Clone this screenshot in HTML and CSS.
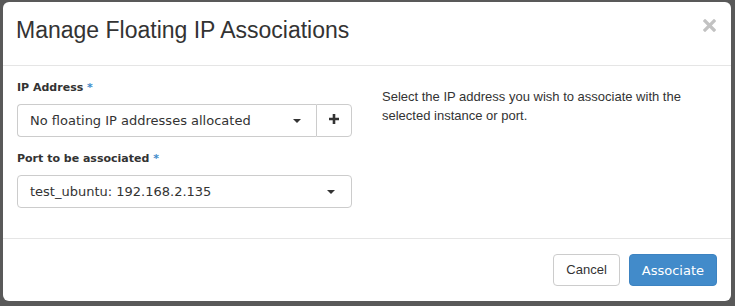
FILE: index.html
```html
<!DOCTYPE html>
<html lang="en">
<head>
    <meta charset="UTF-8">
    <title>Manage Floating IP Associations</title>
    <link rel="stylesheet" href="styles.css">
</head>
<body>
    <div class="modal">
        <div class="modal-header">
            <h3 class="modal-title">Manage Floating IP Associations</h3>
            <button class="close" type="button">
                <svg width="13" height="13" viewBox="0 0 13 13">
                    <path d="M2 2 L11 11 M11 2 L2 11" stroke="#c2c2c2" stroke-width="3.2" stroke-linecap="square" fill="none"/>
                </svg>
            </button>
        </div>

        <div class="modal-body">
            <div class="row">
                <div class="col-form">
                    <div class="form-group">
                        <label class="control-label">IP Address <span class="required">*</span></label>
                        <div class="input-group">
                            <div class="select select-ip">
                                <span>No floating IP addresses allocated</span>
                                <span class="caret"></span>
                            </div>
                            <button class="btn-add" type="button">
                                <svg width="10" height="10" viewBox="0 0 10 10">
                                    <path d="M5 0 V10 M0 5 H10" stroke="#333" stroke-width="2.6" fill="none"/>
                                </svg>
                            </button>
                        </div>
                    </div>

                    <div class="form-group">
                        <label class="control-label">Port to be associated <span class="required">*</span></label>
                        <div class="select select-port">
                            <span>test_ubuntu: 192.168.2.135</span>
                            <span class="caret"></span>
                        </div>
                    </div>
                </div>

                <div class="col-help">
                    <p>Select the IP address you wish to associate with the selected instance or port.</p>
                </div>
            </div>
        </div>

        <div class="modal-footer">
            <a class="btn btn-default" href="#">Cancel</a>
            <button class="btn btn-primary" type="button">Associate</button>
        </div>
    </div>
</body>
</html>
```

FILE: styles.css
```css
body {
    margin: 0;
    padding: 2px 0 0 3px;
    background-color: #595959;
    font-family: 'Liberation Sans', Arial, sans-serif;
    color: #333;
}
.modal {
    width: 728px;
    height: 299px;
    background-color: white;
    border-radius: 6px;
    display: flex;
    flex-direction: column;
}
.modal-header {
    display: flex;
    justify-content: space-between;
    align-items: flex-start;
    padding: 15px 15px 22px 13px;
    border-bottom: 1px solid #e5e5e5;
}
.modal-title {
    margin: 0;
    font-size: 23px;
    font-weight: normal;
    line-height: 26px;
    color: #333;
}
.close {
    margin-top: 2px;
    padding: 0;
    border: none;
    background: none;
    line-height: 0;
    cursor: pointer;
}
.modal-body {
    padding: 14px 15px 15px 14px;
}
.row {
    display: grid;
    grid-template-columns: 335px 1fr;
    column-gap: 30px;
}
.form-group {
    margin-bottom: 14px;
}
.control-label {
    display: block;
    font-family: 'DejaVu Sans', sans-serif;
    font-size: 11px;
    font-weight: bold;
    line-height: 16px;
    margin-bottom: 8px;
}
.required {
    color: #428bca;
}
.input-group {
    display: flex;
}
.select {
    display: flex;
    align-items: center;
    justify-content: space-between;
    height: 33px;
    box-sizing: border-box;
    padding: 0 16px 0 12px;
    border: 1px solid #ccc;
    border-radius: 4px;
    font-family: 'DejaVu Sans', sans-serif;
    font-size: 13px;
    color: #333;
}
.select-ip {
    flex: 1;
    padding-right: 15px;
    border-right: none;
    border-radius: 4px 0 0 4px;
}
.caret {
    width: 0;
    height: 0;
    border-top: 4px solid #333;
    border-left: 4px solid transparent;
    border-right: 4px solid transparent;
}
.btn-add {
    width: 36px;
    height: 33px;
    box-sizing: border-box;
    padding: 0 0 4px;
    border: 1px solid #ccc;
    border-radius: 0 4px 4px 0;
    background-color: white;
    display: flex;
    align-items: center;
    justify-content: center;
    cursor: pointer;
}
.col-help {
    padding-top: 8px;
}
.col-help p {
    margin: 0;
    font-size: 13px;
    line-height: 18.5px;
    color: #333;
}
.modal-footer {
    margin-top: auto;
    display: flex;
    justify-content: flex-end;
    gap: 9px;
    padding: 15px 14px 15px 15px;
    border-top: 1px solid #e5e5e5;
}
.btn {
    height: 32px;
    box-sizing: border-box;
    padding: 0 12px;
    border: 1px solid #ccc;
    border-radius: 4px;
    font-size: 13px;
    display: flex;
    align-items: center;
    text-decoration: none;
    cursor: pointer;
}
.btn-default {
    background-color: white;
    color: #333;
    font-family: 'Liberation Sans', Arial, sans-serif;
    padding-bottom: 2px;
}
.btn-primary {
    background-color: #428bca;
    border-color: #3d83c1;
    color: white;
    font-family: 'DejaVu Sans', sans-serif;
}
```
